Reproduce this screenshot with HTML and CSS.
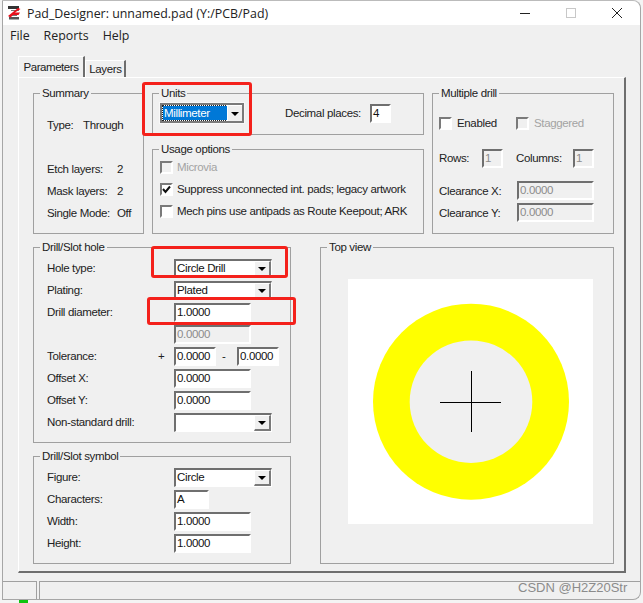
FILE: index.html
```html
<!DOCTYPE html>
<html lang="en">
<head>
<meta charset="utf-8">
<title>Pad_Designer</title>
<link rel="stylesheet" href="styles.css">
</head>
<body>
<div class="screen">
  <div class="window">
    <header class="titlebar">
      <svg class="app-icon" width="14" height="14" viewBox="0 0 14 14">
        <path d="M1 0h11v3H1z" fill="#333"/>
        <path d="M2 11h10v2.500H2z" fill="#555"/>
        <path d="M4 4h8v1H4zM2 9h8v1H2z" fill="#777"/>
        <path d="M1 10 11 2l2.500 1L8 6.500h5L11.500 9H6l-2.500 2.500z" fill="#e8101c"/>
      </svg>
      <span class="title">Pad_Designer: unnamed.pad (Y:/PCB/Pad)</span>
      <div class="win-btns">
        <svg class="win-btn" width="12" height="12" viewBox="0 0 12 12"><path d="M1 6.500h10" stroke="#222" stroke-width="1"/></svg>
        <svg class="win-btn" width="12" height="12" viewBox="0 0 12 12"><rect x="1.500" y="1.500" width="9" height="9" fill="none" stroke="#c8c8c8"/></svg>
        <svg class="win-btn" width="12" height="12" viewBox="0 0 12 12"><path d="M1 1l10 10M11 1 1 11" stroke="#222" stroke-width="1"/></svg>
      </div>
    </header>
    <nav class="menubar"><span>File</span><span>Reports</span><span>Help</span></nav>
    <div class="content">
      <div class="tabs">
        <div class="tab active">Parameters</div>
        <div class="tab">Layers</div>
      </div>
      <main class="panel">
        <div class="row-top">
          <section class="group summary">
            <div class="legend">Summary</div>
            <div class="line"><span class="k-type">Type:</span><span>Through</span></div>
            <div class="line"></div>
            <div class="line"><span class="k-sum">Etch layers:</span><span>2</span></div>
            <div class="line"><span class="k-sum">Mask layers:</span><span>2</span></div>
            <div class="line"><span class="k-sum">Single Mode:</span><span>Off</span></div>
          </section>
          <div class="mid">
            <section class="group units">
              <div class="legend">Units</div>
              <div class="units-row">
                <div class="select sel-units"><span class="sel-text"><span class="hl">Millimeter</span></span><span class="arrow-btn"><i class="arrow"></i></span></div>
                <span class="dec-label">Decimal places:</span>
                <div class="input w21">4</div>
              </div>
            </section>
            <section class="group usage">
              <div class="legend">Usage options</div>
              <div class="check-row disabled"><i class="check"></i><span>Microvia</span></div>
              <div class="check-row"><i class="check"><svg width="9" height="9" viewBox="0 0 9 9"><path d="M1 4l2.500 3L8 1.500" fill="none" stroke="#111" stroke-width="2"/></svg></i><span>Suppress unconnected int. pads; legacy artwork</span></div>
              <div class="check-row"><i class="check"></i><span>Mech pins use antipads as Route Keepout; ARK</span></div>
            </section>
          </div>
          <section class="group multi">
            <div class="legend">Multiple drill</div>
            <div class="multi-checks">
              <div class="check-row c77"><i class="check"></i><span>Enabled</span></div>
              <div class="check-row disabled"><i class="check"></i><span>Staggered</span></div>
            </div>
            <div class="multi-counts">
              <span class="l43">Rows:</span><div class="input w21 off">1</div>
              <span class="l57">Columns:</span><div class="input w21 off">1</div>
            </div>
            <div class="clear clear-x"><span class="l78">Clearance X:</span><div class="input w77 off">0.0000</div></div>
            <div class="clear clear-y"><span class="l78">Clearance Y:</span><div class="input w77 off">0.0000</div></div>
          </section>
        </div>
        <div class="row-bottom">
          <div class="left">
            <section class="group hole">
              <div class="legend">Drill/Slot hole</div>
              <div class="rows">
                <div class="f"><label>Hole type:</label><div class="select w98"><span class="sel-text">Circle Drill</span><span class="arrow-btn"><i class="arrow"></i></span></div></div>
                <div class="f"><label>Plating:</label><div class="select w98"><span class="sel-text">Plated</span><span class="arrow-btn"><i class="arrow"></i></span></div></div>
                <div class="f"><label>Drill diameter:</label><div class="input w77">1.0000</div></div>
                <div class="f"><label></label><div class="input w77 off">0.0000</div></div>
                <div class="f"><label class="short">Tolerance:</label><span class="sign">+</span><div class="input w42">0.0000</div><span class="sign minus">-</span><div class="input w42">0.0000</div></div>
                <div class="f"><label>Offset X:</label><div class="input w77">0.0000</div></div>
                <div class="f"><label>Offset Y:</label><div class="input w77">0.0000</div></div>
                <div class="f"><label>Non-standard drill:</label><div class="select w98"><span class="sel-text"></span><span class="arrow-btn"><i class="arrow"></i></span></div></div>
              </div>
            </section>
            <section class="group symbol">
              <div class="legend">Drill/Slot symbol</div>
              <div class="rows">
                <div class="f"><label>Figure:</label><div class="select w98"><span class="sel-text">Circle</span><span class="arrow-btn"><i class="arrow"></i></span></div></div>
                <div class="f"><label>Characters:</label><div class="input w35">A</div></div>
                <div class="f"><label>Width:</label><div class="input w77">1.0000</div></div>
                <div class="f"><label>Height:</label><div class="input w77">1.0000</div></div>
              </div>
            </section>
          </div>
          <section class="group top-view">
            <div class="legend">Top view</div>
            <svg class="canvas" width="245" height="245" viewBox="0 0 245 245">
              <rect width="245" height="245" fill="#fff"/>
              <circle cx="123" cy="122.700" r="98" fill="#ff0"/>
              <circle cx="123" cy="122.700" r="61.300" fill="#f0f0f0"/>
              <path d="M92 123.500h61M123.500 92v61" stroke="#000" stroke-width="1"/>
            </svg>
          </section>
        </div>
      </main>
    </div>
    <footer class="statusbar"><div class="pane first"></div><div class="pane second"></div></footer>
  </div>
  <div class="mark mark-units"></div>
  <div class="mark mark-hole"></div>
  <div class="mark mark-drill"></div>
  <div class="watermark">CSDN @H2Z20Str</div>
  <div class="taskbit"></div>
</div>
</body>
</html>
```
FILE: styles.css
```css
* { box-sizing: border-box; }
html, body { margin: 0; padding: 0; background: #fff; }
body { font-family: "Liberation Sans", Arial, sans-serif; font-size: 11.5px; letter-spacing: -0.35px; color: #222; }
.screen { position: relative; width: 643px; height: 603px; overflow: hidden; background: #f4f4f4; }
.window {
  width: 639px; height: 600px; margin-left: 2px;
  display: flex; flex-direction: column;
  background: #f0f0f0; border: 1px solid #a6a6a6; border-top-color: #bbb;
  border-radius: 0 8px 8px 0;
}
.titlebar { height: 24px; background: #fff; display: flex; align-items: center; padding-left: 4px; border-radius: 0 8px 0 0; }
.app-icon { margin-right: 6px; flex: none; }
.title { font-family: "Open Sans", sans-serif; font-size: 12.400px; letter-spacing: 0; color: #222; }
.win-btns { margin-left: auto; display: flex; gap: 34px; padding-right: 17px; }
.win-btn { display: block; }
.menubar { height: 20px; display: flex; align-items: center; font-family: "Open Sans", sans-serif; font-size: 12.400px; letter-spacing: 0; color: #222; padding-left: 7px; gap: 14px; }
.content { flex: 1; padding: 11px 0 0 15px; }
.tabs { display: flex; align-items: flex-end; height: 21px; position: relative; z-index: 1; }
.tab { height: 17px; width: 41px; text-align: center; line-height: 17px; padding-left: 1px; border-top: 1px solid #fff; border-right: 2px solid #6e6e6e; border-left: 1px solid #fff; }
.tab.active { width: 67px; height: 21px; line-height: 20px; padding-left: 0; letter-spacing: -0.45px; background: #f0f0f0; }
.panel { width: 608px; height: 496px; border: 1px solid #fff; border-right: 2px solid #6e6e6e; border-bottom: 2px solid #6e6e6e; padding: 15px 0 0 14px; }
.row-top { display: flex; gap: 8px; height: 141px; }
.row-bottom { display: flex; margin-top: 13px; height: 317px; gap: 29px; }
.group { border: 1px solid #a0a0a0; }
.legend { width: fit-content; height: 15px; line-height: 15px; margin: -8px 0 0 6px; padding: 0 2px; background: #f0f0f0; white-space: nowrap; }
.summary { width: 111px; padding-left: 13px; }
.summary .legend { margin-left: -7px; margin-bottom: 13px; }
.line { height: 22px; display: flex; align-items: center; white-space: nowrap; }
.k-type { width: 36px; }
.k-sum { width: 70px; }
.mid { width: 272px; display: flex; flex-direction: column; gap: 14px; }
.units { height: 42px; }
.units-row { display: flex; align-items: center; padding: 2px 0 0 7px; }
.dec-label { margin: 0 11px 0 41px; width: 74px; white-space: nowrap; }
.usage { height: 85px; padding-left: 7px; }
.usage .legend { margin-left: -1px; }
.check-row { display: flex; align-items: center; height: 20px; gap: 4px; white-space: nowrap; }
.usage .check-row + .check-row { margin-top: 2px; }
.disabled { color: #a3a3a3; }
.check { width: 13px; height: 13px; flex: none; display: flex; align-items: center; justify-content: center; background: #fff; border: 2px solid; border-color: #7a7a7a #fff #fff #7a7a7a; }
.disabled .check { background: #f0f0f0; }
.multi { width: 182px; padding-left: 6px; }
.multi .legend { margin-left: 0; }
.multi-checks { display: flex; margin-top: 12px; }
.multi-checks .check-row { gap: 5px; }
.c77 { width: 77px; }
.multi-counts { display: flex; align-items: center; margin-top: 15px; height: 20px; }
.l43 { width: 43px; }
.l57 { width: 57px; margin-left: 13px; }
.l78 { width: 78px; white-space: nowrap; }
.clear { display: flex; align-items: center; height: 19px; }
.clear-x { margin-top: 13px; }
.clear-y { margin-top: 3px; }
.input { height: 19px; background: #fff; border: 2px solid; border-color: #6f6f6f #fff #fff #6f6f6f; line-height: 15px; padding-left: 1px; color: #111; flex: none; overflow: hidden; }
.input.off { background: #f0f0f0; color: #8c8c8c; }
.w21 { width: 21px; } .w35 { width: 35px; } .w42 { width: 42px; } .w77 { width: 77px; }
.select { height: 19px; display: flex; background: #fff; border: 2px solid; border-color: #6f6f6f #fff #fff #6f6f6f; border-width: 2px 1px 1px 2px; flex: none; }
.w98 { width: 98px; }
.sel-units { width: 84px; height: 20px; border-width: 2px; border-color: #7a7a7a; outline: 1px solid #f8f8f8; }
.sel-text { flex: 1; line-height: 15px; padding-left: 1px; color: #111; overflow: hidden; white-space: nowrap; }
.hl { display: block; height: 14px; margin: 1px 0 0 0; line-height: 15px; background: #0078d7; color: #fff; outline: 1px dotted #222; padding-left: 1px; }
.arrow-btn { width: 17px; flex: none; display: flex; align-items: center; justify-content: center; background: #f0f0f0; border-style: solid; border-width: 1px 2px 2px 1px; border-color: #fff #7a7a7a #7a7a7a #fff; }
.sel-units .arrow-btn { border-width: 1px 0 0 1px; width: 15px; }
.arrow { width: 0; height: 0; border-left: 4px solid transparent; border-right: 4px solid transparent; border-top: 4px solid #000; }
.left { display: flex; flex-direction: column; gap: 13px; width: 258px; }
.hole { height: 196px; }
.symbol { height: 108px; }
.rows { display: flex; flex-direction: column; gap: 3px; padding: 4px 0 0 13px; }
.f { display: flex; align-items: center; height: 19px; }
.f label { width: 127px; flex: none; white-space: nowrap; padding-bottom: 2px; }
.f label.short { width: 111px; }
.sign { width: 16px; text-align: left; flex: none; padding-bottom: 2px; }
.minus { width: 21px; text-align: left; padding-left: 6px; }
.top-view { width: 294px; }
.canvas { display: block; margin: 24px 0 0 27px; }
.statusbar { height: 18px; margin-top: auto; display: flex; gap: 2px; }
.pane { height: 100%; border-top: 1px solid #a0a0a0; }
.first { width: 34px; border-right: 1px solid #a0a0a0; }
.second { flex: 1; border-left: 1px solid #a0a0a0; }
.mark { position: absolute; border: 3px solid #f4211b; border-radius: 3px; }
.mark-units { left: 142px; top: 82px; width: 110px; height: 54px; }
.mark-hole { left: 151px; top: 246px; width: 137px; height: 32px; }
.mark-drill { left: 147px; top: 297px; width: 149px; height: 28px; }
.watermark { position: absolute; left: 518px; top: 580px; font-size: 13px; letter-spacing: 0; color: #8b8b8b; white-space: nowrap; }
.taskbit { position: absolute; left: 19px; top: 600px; width: 9px; height: 3px; background: #0ec40e; }
```
